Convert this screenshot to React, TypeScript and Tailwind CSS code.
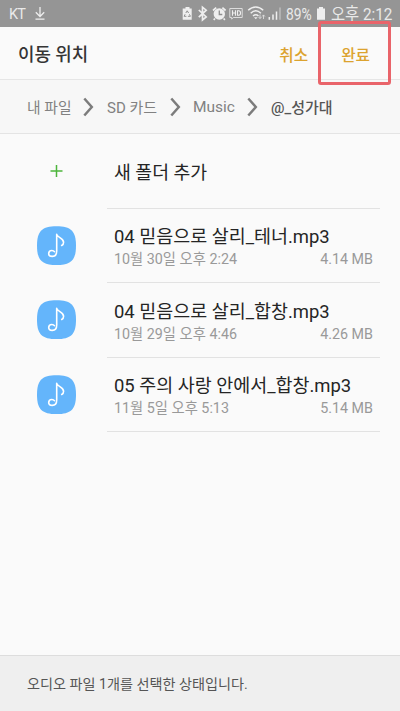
interface AudioFile {
  name: string;
  date: string;
  size: string;
}

const files: AudioFile[] = [
  { name: '04 믿음으로 살리_테너.mp3', date: '10월 30일 오후 2:24', size: '4.14 MB' },
  { name: '04 믿음으로 살리_합창.mp3', date: '10월 29일 오후 4:46', size: '4.26 MB' },
  { name: '05 주의 사랑 안에서_합창.mp3', date: '11월 5일 오후 5:13', size: '5.14 MB' },
];

function StatusIcons() {
  return (
    <svg width="104" height="27" viewBox="180 0 104 27" fill="none" className="shrink-0">
      {/* Battery saver */}
      <path d="M185.500 7h4v1.500h2.200v11.300h-9V8.500h2.800z" fill="#eeeeee" />
      <path d="M185.800 13l1.400-2.200 1.400 2.200M189.400 14.300l1 2h-2.500M186.400 16.300h-2.300l1-2" stroke="#8f8f8f" strokeWidth="1" />
      {/* Bluetooth */}
      <path d="M198.800 10l7.400 7-3.700 3V7.200l3.700 3-7.400 7" stroke="#eeeeee" strokeWidth="1.700" />
      {/* Alarm */}
      <circle cx="219.300" cy="14" r="5.700" fill="#eeeeee" />
      <path d="M213 10.500l3.200-2.900M225.600 10.500l-3.200-2.900M215 18.500l-1.300 1.400M223.600 18.500l1.300 1.400" stroke="#eeeeee" strokeWidth="1.700" />
      <path d="M219.300 10.500v4h3" stroke="#8f8f8f" strokeWidth="1.300" />
      {/* HD voice */}
      <path d="M229.800 8.500h12.400v9h-9l-1.500 1.700v-1.700h-1.900z" stroke="#dcdcdc" strokeWidth="1" />
      <path d="M232.500 10.300v5.400M235.500 10.300v5.400M232.500 13h3M237.500 10.800v4.400h1.300c2.300 0 2.300-4.400 0-4.400z" stroke="#eeeeee" strokeWidth="1.100" />
      {/* Wi-Fi */}
      <path d="M248.200 10.300c4.500-4.400 10.500-4.400 15 0M250.700 13.200c3.200-3 7-3 10.200 0M253 16c1.700-1.500 3.800-1.500 5.500 0" stroke="#eeeeee" strokeWidth="1.500" />
      <path d="M254 17.200h3.600l-1.800 2z" fill="#eeeeee" />
      <path d="M260 14.500v4M258.600 17l1.400 1.600 1.400-1.600M263.500 19v-4M262.100 16.500l1.400-1.600 1.400 1.600" stroke="#dddddd" strokeWidth=".9" />
      {/* Signal */}
      <path d="M269.300 17v2.800M273 14.500v5.300M276.500 11.500v8.300" stroke="#eeeeee" strokeWidth="1.500" />
      <path d="M280 7.500v12.300" stroke="#bdbdbd" strokeWidth="1.500" />
    </svg>
  );
}

function StatusBar() {
  return (
    <div className="flex h-[27px] shrink-0 items-center bg-[#959595] pl-[9px] text-[#e9e9e9]">
      <span className="w-[25px] pt-[3px] text-[14.500px] leading-none tracking-[-0.8px]">KT</span>
      <svg width="12" height="27" viewBox="34 0 12 27" fill="none" stroke="#eeeeee" strokeWidth="1.300">
        <path d="M40 7v9.500M35.800 12.300l4.200 4.200 4.200-4.200M35.500 19.200h9" />
      </svg>
      <div className="ml-auto flex items-center">
        <StatusIcons />
        <span className="ml-[2px] w-[30px] origin-left scale-x-[.84] whitespace-nowrap pt-[3px] text-[16.500px] leading-none">89%</span>
        <svg width="10" height="27" viewBox="0 0 10 27">
          <path d="M3 7h4v1.500h2v11.300H1V8.500h2z" fill="#eeeeee" />
        </svg>
        <span className="ml-[5px] w-[69px] origin-left scale-x-[.9] whitespace-nowrap pt-[2px] text-[17px] leading-none">오후 2:12</span>
      </div>
    </div>
  );
}

function Chevron() {
  return (
    <svg width="11" height="20" viewBox="0 0 11 20" fill="none" className="shrink-0">
      <path d="M1.300 1.500L8.800 10 1.300 18.500" stroke="#7c7c7c" strokeWidth="2.500" />
    </svg>
  );
}

function MusicIcon() {
  return (
    <svg width="40" height="40" viewBox="0 0 40 40" fill="none" className="shrink-0">
      <path d="M19.500.3C34 .3 39 5.200 39 19.700S34 39.100 19.500 39.100 0 34.200 0 19.700 5 .3 19.500.3z" fill="#64b5fb" />
      <path
        d="M19.700 25V8.300c.6 3.200 6.900 3.700 6.900 7.900 0 1.500-.8 2.700-1.900 3.300M19.700 25c0 3.300-1.700 5.400-4.500 5.400-2.200 0-3.500-1.200-3.500-2.900 0-1.900 1.500-3 3.200-3 1.200 0 2 .4 2.500 1.200"
        stroke="#ffffff"
        strokeWidth="1.600"
        strokeLinecap="round"
        strokeLinejoin="round"
      />
    </svg>
  );
}

function FileRow({ file }: { file: AudioFile }) {
  return (
    <li className="flex h-[74.500px] items-center pl-[37px] pr-5">
      <MusicIcon />
      <div className="ml-[30px] flex h-full flex-1 flex-col border-b border-[#e2e2e2] pl-[7px] pr-[7px] pt-[16.500px]">
        <p className="whitespace-nowrap text-[18.450px] leading-[24px] text-[#252525]">{file.name}</p>
        <div className="flex justify-between whitespace-nowrap text-[14.300px] leading-[20px] text-[#999999]">
          <span>{file.date}</span>
          <span>{file.size}</span>
        </div>
      </div>
    </li>
  );
}

export default function App() {
  return (
    <div className="flex h-[711px] w-[400px] flex-col overflow-hidden bg-[#fafafa] font-[Roboto,'Noto_Sans_CJK_KR',sans-serif]">
      <StatusBar />

      <header className="relative flex h-[53px] shrink-0 items-center border-b border-[#e6e6e6] pl-[18px] pt-[5px] font-medium">
        <h1 className="text-[17.900px] text-[#353535]">이동 위치</h1>
        <button className="ml-auto text-[15.700px] text-[#dca32f]">취소</button>
        <button className="ml-[33px] mr-[30px] text-[15.700px] text-[#dca32f]">완료</button>
        {/* Highlight around the done button */}
        <div className="absolute left-[318px] top-[-6px] h-[64px] w-[73px] rounded-[3px] border-[3px] border-[#e9646a]" />
      </header>

      <nav className="flex h-[54px] shrink-0 items-center whitespace-nowrap border-b border-[#e4e4e4] bg-[#f7f7f7] pl-[27px] text-[15px] text-[#818181]">
        <span className="w-[56px] pt-[3px] text-[14.800px]">내 파일</span>
        <Chevron />
        <span className="ml-[13px] w-[63px] pt-[3px]">SD 카드</span>
        <Chevron />
        <span className="ml-[12px] w-[54px] pt-[3px] text-[15.500px]">Music</span>
        <Chevron />
        <span className="ml-[13px] pt-[3px] font-medium text-[#555555]">@_성가대</span>
      </nav>

      <ul className="flex-1">
        <li className="flex h-[74.500px] items-center pl-[37px] pr-5">
          <svg width="40" height="40" viewBox="0 0 40 40" className="shrink-0">
            <path d="M19.500 14v12M13.500 20h12" stroke="#4db53c" strokeWidth="1.500" />
          </svg>
          <div className="ml-[30px] flex h-full flex-1 items-center border-b border-[#e2e2e2] pl-[7px] pt-1 text-[18.300px] text-[#252525]">
            새 폴더 추가
          </div>
        </li>
        {files.map(file => (
          <FileRow key={file.name} file={file} />
        ))}
      </ul>

      <footer className="flex h-[56px] shrink-0 items-center border-t border-[#dddddd] bg-[#efefef] pl-[27px] pt-[3px] text-[14.150px] text-[#555555]">
        오디오 파일 1개를 선택한 상태입니다.
      </footer>
    </div>
  );
}
